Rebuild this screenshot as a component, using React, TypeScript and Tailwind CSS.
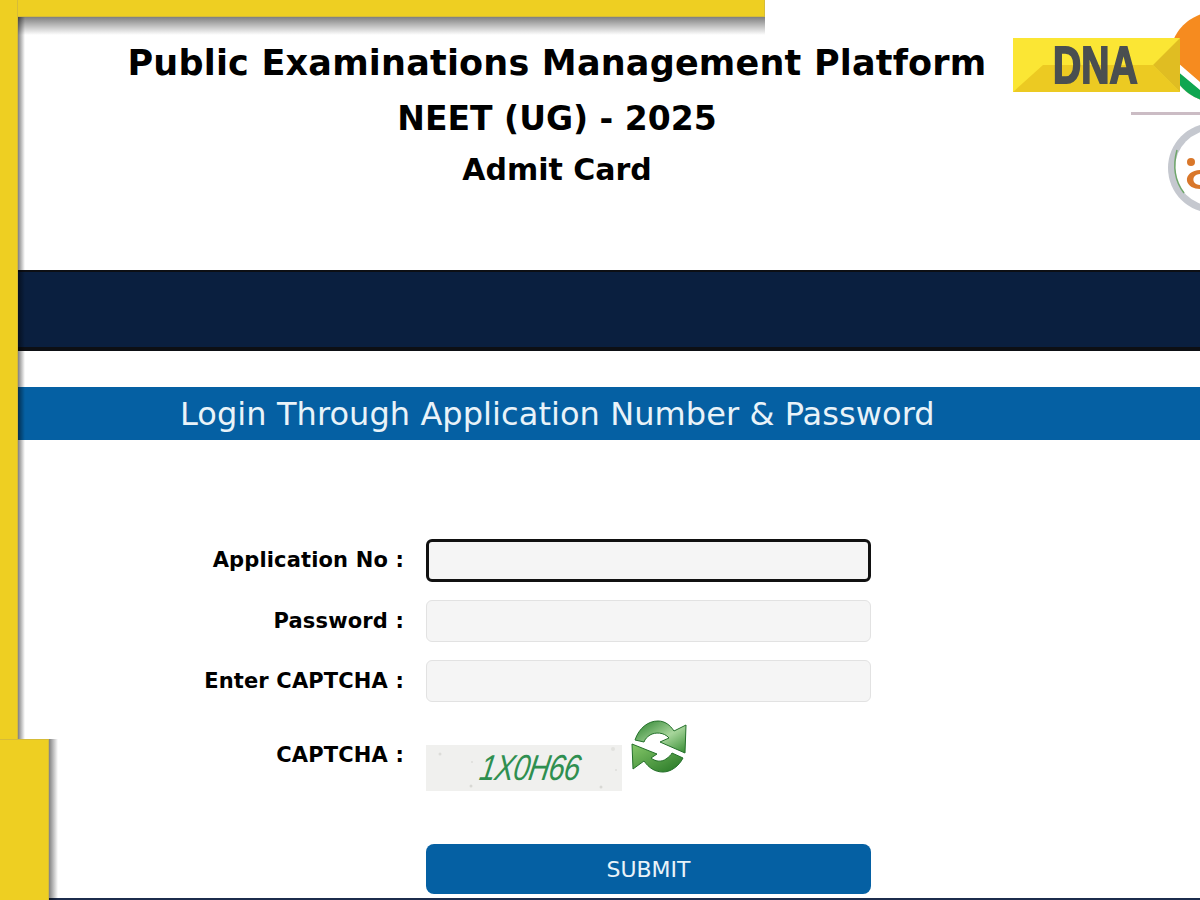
const font = "[font-family:'DejaVu_Sans',Verdana,sans-serif]";

const FormRow = ({ label, focused }: { label: string; focused?: boolean }) => {
  return (
    <div className="flex items-center">
      <label
        className={
          focused
            ? "w-[408px] pr-[22px] text-right text-[21px] font-bold tracking-[0.15px] text-black"
            : "w-[408px] pr-[22px] pt-[2px] text-right text-[21px] font-bold tracking-[0.15px] text-black"
        }
      >
        {label}
      </label>
      <input
        className={
          focused
            ? "h-[43px] w-[445px] rounded-[6px] border-[3px] border-[#111] bg-[#f5f5f5]"
            : "h-[42px] w-[445px] rounded-[6px] border border-[#e2e2e2] bg-[#f5f5f5]"
        }
      />
    </div>
  );
};

const RefreshIcon = () => (
  <svg width="56" height="56" viewBox="0 0 56 56">
    <defs>
      <linearGradient id="topArrow" x1="0" y1="0" x2="1" y2="1">
        <stop offset="0" stopColor="#26802a" />
        <stop offset="0.55" stopColor="#a8d69c" />
        <stop offset="1" stopColor="#348c30" />
      </linearGradient>
      <linearGradient id="bottomArrow" x1="0" y1="0" x2="1" y2="1">
        <stop offset="0" stopColor="#86c86a" />
        <stop offset="1" stopColor="#247524" />
      </linearGradient>
    </defs>
    <path
      d="M4 20 C8 8 17 1 27 1 C34 1 39 5 43 11 L55 5 L54 33 L29 22 L38 18 C33 12 24 12 19 15 C16 17 14 19 13 22 Z"
      fill="url(#topArrow)"
      stroke="#24702a"
      strokeWidth="1"
    />
    <path
      d="M1 24 L26 34 L20 38 C25 42 31 42 35 39 C38 37 40 35 41 33 L52 38 C48 46 40 52 32 52 C24 52 18 48 13 41 L2 49 Z"
      fill="url(#bottomArrow)"
      stroke="#24702a"
      strokeWidth="1"
    />
  </svg>
);

const CaptchaSpecks = () => (
  <svg className="absolute inset-0" width="196" height="46" viewBox="0 0 196 46">
    <circle cx="14" cy="9" r="1.5" fill="#dcdcd8" />
    <circle cx="46" cy="17" r="1" fill="#dededa" />
    <circle cx="45" cy="41" r="1.5" fill="#d8d8d4" />
    <circle cx="187" cy="4" r="2" fill="#e2e2de" />
    <circle cx="175" cy="42" r="1.5" fill="#d8d8d4" />
    <circle cx="190" cy="25" r="1" fill="#dededa" />
  </svg>
);

const SideLogos = () => (
  <div className="absolute right-0 top-0 h-[230px] w-[232px] overflow-hidden">
    <svg className="blur-[0.5px]" width="232" height="230" viewBox="968 0 232 230">
      <defs>
        <clipPath id="ntaCircle">
          <circle cx="1215" cy="57" r="45" />
        </clipPath>
      </defs>
      <g clipPath="url(#ntaCircle)">
        <rect x="1165" y="10" width="70" height="100" fill="#f68b1f" />
        <path d="M1170 56 L1200 82 L1232 60 L1232 110 L1170 110 Z" fill="#ffffff" />
        <path d="M1176 70 L1200 90 L1232 70 L1232 110 L1176 110 Z" fill="#10a650" />
      </g>
      <rect x="1131" y="112" width="69" height="3" fill="#cbbcc4" />
      <circle cx="1213" cy="168" r="45" fill="#c5c8cf" />
      <circle cx="1213" cy="168" r="38" fill="#ffffff" />
      <path d="M1177 150 C1173 165 1174 180 1184 193" fill="none" stroke="#6fa66a" strokeWidth="1.5" />
      <circle cx="1191" cy="162" r="4" fill="#d9772a" />
      <path
        d="M1200 170 C1192 170 1186 175 1187 181 C1188 186 1194 189 1200 189 L1200 185 C1195 185 1192 181 1194 177 C1195 175 1198 174 1200 174 Z"
        fill="#d9772a"
      />
    </svg>
  </div>
);

const DnaLogo = () => (
  <div className="absolute left-[1013px] top-[38px] flex h-[54px] w-[167px] items-center justify-center bg-[#fbe634]">
    <svg className="absolute inset-0" width="167" height="54" viewBox="0 0 167 54">
      <path d="M0 54 L30 27 L140 27 L167 54 Z" fill="#ecca22" />
      <path d="M167 0 L140 27 L167 54 Z" fill="#e0bd22" />
    </svg>
    <span className="relative -ml-[3px] scale-x-[0.75] font-['Liberation_Sans',sans-serif] text-[52px] font-bold leading-none text-[#4a4f50] [-webkit-text-stroke:2px_#4a4f50]">
      DNA
    </span>
  </div>
);

const Frame = () => (
  <>
    <div className="absolute left-[18px] top-[17px] h-[18px] w-[747px] bg-gradient-to-b from-black/50 to-transparent" />
    <div className="absolute left-[18px] top-[17px] h-[722px] w-[7px] bg-gradient-to-r from-black/50 to-transparent" />
    <div className="absolute left-[49px] top-[739px] h-[161px] w-[9px] bg-gradient-to-r from-black/50 to-transparent" />
    <div className="absolute left-0 top-0 h-[17px] w-[765px] border-b border-r border-[#d6bc38] bg-[#eecf22]" />
    <div className="absolute left-0 top-0 h-[739px] w-[18px] border-r border-[#d6bc38] bg-[#eecf22]" />
    <div className="absolute bottom-0 left-0 h-[161px] w-[49px] border-r border-t border-[#d6bc38] bg-[#eecf22]" />
  </>
);

export default function App() {
  return (
    <div className={`relative h-[900px] w-[1200px] overflow-hidden bg-white pl-[18px] ${font}`}>
      {/* header */}
      <div className="flex h-[270px] w-[1078px] flex-col items-center pt-[38px] text-black">
        <h1 className="text-[35px] font-bold leading-[50px] tracking-[0.2px]">Public Examinations Management Platform</h1>
        <h2 className="mt-[6px] text-[33px] font-bold leading-[50px]">NEET (UG) - 2025</h2>
        <h3 className="mt-[1px] text-[30px] font-bold leading-[50px]">Admit Card</h3>
      </div>

      <div className="h-[81px] border-b-[4px] border-t-[2px] border-b-[#0d0f14] border-t-[#0d0f14] bg-[#0a1f3f]" />

      <div className="mt-[36px] flex h-[53px] items-center bg-[#0560a3] pl-[162px] text-[32px] tracking-[0.07px] text-[#e9f3f9]">
        Login Through Application Number &amp; Password
      </div>

      {/* form */}
      <div className="mt-[99px] flex flex-col gap-[18px]">
        <FormRow label="Application No :" focused />
        <FormRow label="Password :" />
        <FormRow label="Enter CAPTCHA :" />
      </div>

      <div className="mt-[18px] flex items-start">
        <span className="mt-[20px] w-[408px] pr-[22px] text-right text-[21px] font-bold tracking-[0.15px] text-black">CAPTCHA :</span>
        <div className="relative mt-[25px] flex h-[46px] w-[196px] items-center justify-center bg-[#f0f0ee]">
          <CaptchaSpecks />
          <span className="relative ml-[12px] -skew-x-[12deg] scale-x-[0.8] font-['Liberation_Sans',sans-serif] text-[36px] italic tracking-[-1px] text-[#2f8f50]">
            1X0H66
          </span>
        </div>
        <div className="ml-[9px]">
          <RefreshIcon />
        </div>
      </div>

      <div className="mt-[53px] flex pl-[408px]">
        <button className="h-[50px] w-[445px] rounded-[8px] bg-[#0560a3] text-[22px] text-[#e9f3f9]">SUBMIT</button>
      </div>
      <div className="absolute bottom-0 left-[49px] right-0 h-[2px] bg-[#1c2c4c]" />

      <SideLogos />
      <DnaLogo />
      <Frame />
    </div>
  );
}
